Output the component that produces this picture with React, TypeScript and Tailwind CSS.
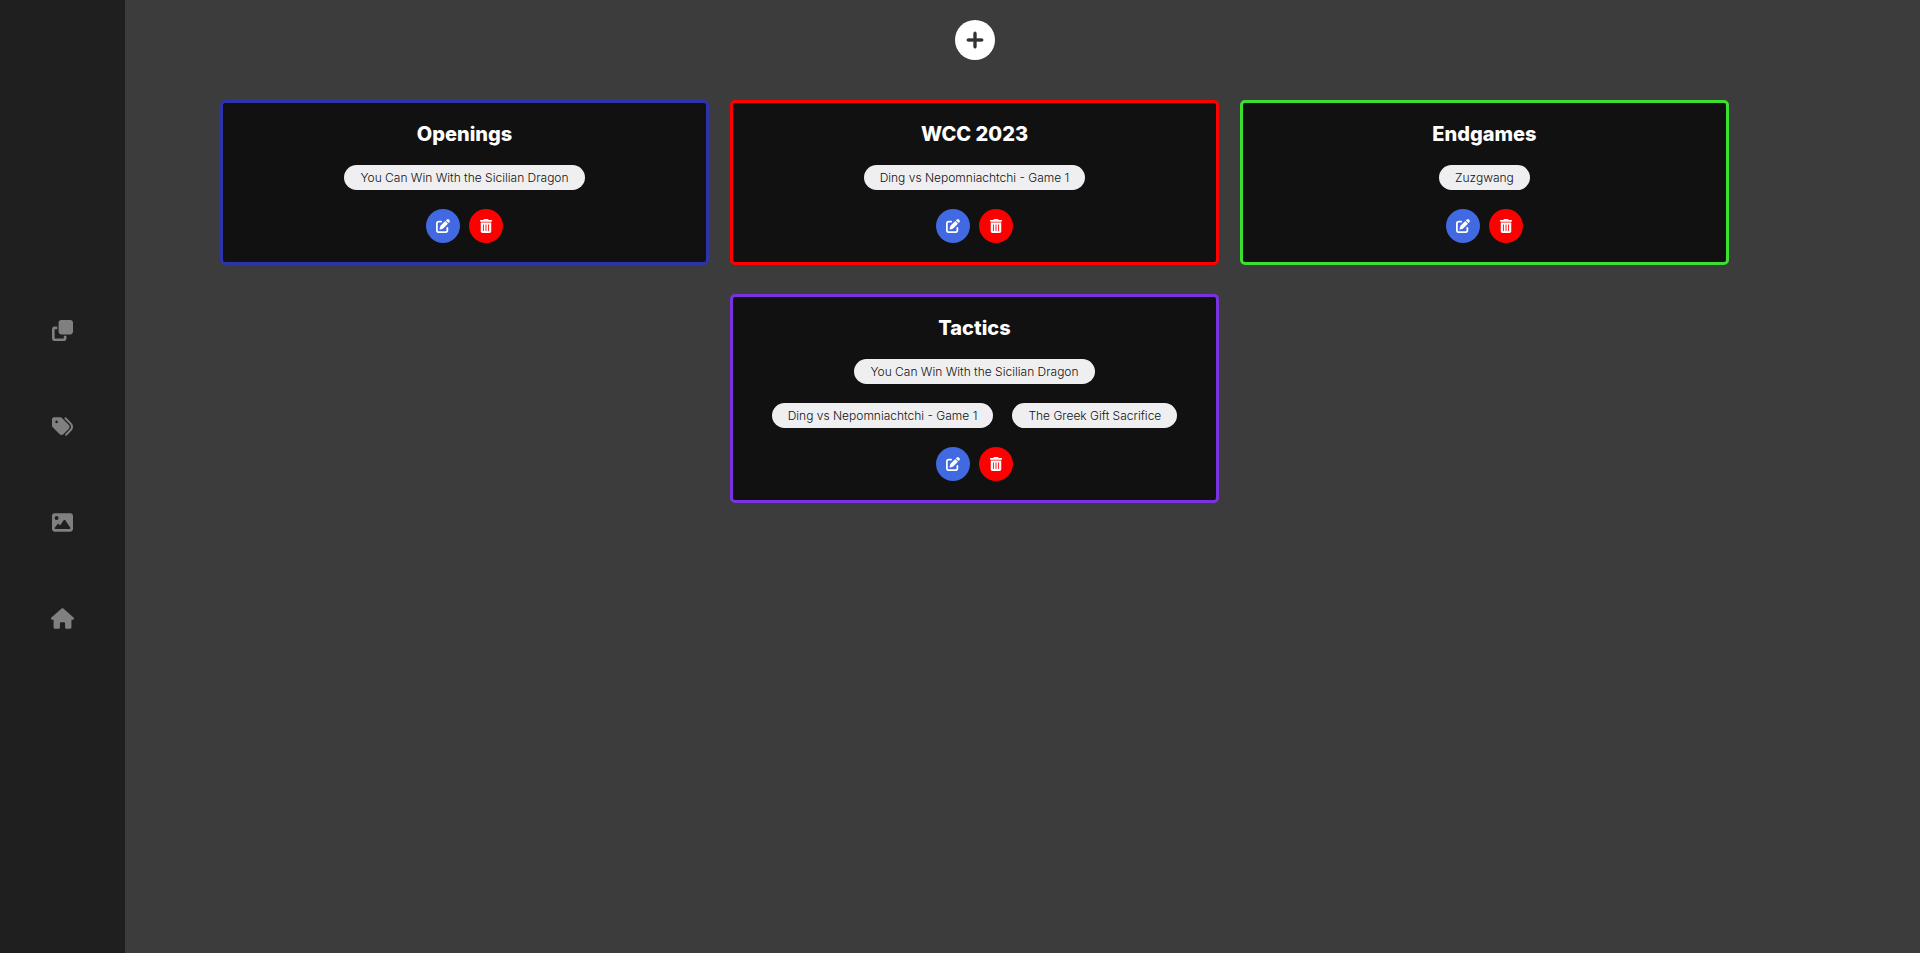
import type { IconType } from 'react-icons';
import { FaClone, FaHouse, FaImage, FaPenToSquare, FaPlus, FaTags, FaTrashCan } from 'react-icons/fa6';

type Tag = {
  name: string;
  border: string;
  posts: string[];
};

const tags: Tag[] = [
  { name: 'Openings', border: 'border-[#2d33aa]', posts: ['You Can Win With the Sicilian Dragon'] },
  { name: 'WCC 2023', border: 'border-[#ff0000]', posts: ['Ding vs Nepomniachtchi - Game 1'] },
  { name: 'Endgames', border: 'border-[#39e02f]', posts: ['Zuzgwang'] },
  {
    name: 'Tactics',
    border: 'border-[#7a32e0]',
    posts: [
      'You Can Win With the Sicilian Dragon',
      'Ding vs Nepomniachtchi - Game 1',
      'The Greek Gift Sacrifice',
    ],
  },
];

const links: { label: string; href: string; Icon: IconType; size: string }[] = [
  { label: 'Posts', href: '#posts', Icon: FaClone, size: 'w-[21px]' },
  { label: 'Tags', href: '#tags', Icon: FaTags, size: 'w-[21px]' },
  { label: 'Images', href: '#images', Icon: FaImage, size: 'w-[21px]' },
  { label: 'Home', href: '#home', Icon: FaHouse, size: 'w-[23px]' },
];

function Sidebar() {
  return (
    <nav className="flex w-[125px] shrink-0 flex-col items-center justify-center gap-[75px] bg-[#1f1f1f] pb-1 text-[#808080]">
      {links.map(({ label, href, Icon, size }) => (
        <a key={label} href={href} aria-label={label} className="hover:text-white">
          <Icon className={`h-[21px] ${size}`} />
        </a>
      ))}
    </nav>
  );
}

function TagCard({ tag }: { tag: Tag }) {
  return (
    <article
      className={`flex w-[calc((100%-42px)/3)] flex-col items-center gap-[19px] rounded-[5px] border-[3px] bg-[#111111] px-5 pt-[18px] pb-[19px] ${tag.border}`}
    >
      <h2 className="pt-px text-xl leading-6 font-extrabold text-white">{tag.name}</h2>
      <ul className="flex flex-wrap justify-center gap-[19px]">
        {tag.posts.map((post) => (
          <li key={post} className="rounded-full bg-[#efeff1] px-4 text-xs leading-[25px] font-light text-[#111111]">
            {post}
          </li>
        ))}
      </ul>
      <div className="flex gap-[9px] text-sm text-white">
        <button
          type="button"
          aria-label={`Edit ${tag.name}`}
          className="flex size-[34px] items-center justify-center rounded-full bg-[#4169e1]"
        >
          <FaPenToSquare />
        </button>
        <button
          type="button"
          aria-label={`Delete ${tag.name}`}
          className="flex size-[34px] items-center justify-center rounded-full bg-[#ff0000]"
        >
          <FaTrashCan />
        </button>
      </div>
    </article>
  );
}

export default function App() {
  return (
    <div className="flex min-h-screen bg-[#3c3c3c] font-['Inter',sans-serif]">
      <Sidebar />
      <main className="flex min-w-0 flex-1 flex-col items-center gap-10 py-5 pr-[191px] pl-[95px]">
        <button
          type="button"
          aria-label="Add tag"
          className="flex size-10 items-center justify-center rounded-full bg-white text-xl text-[#333333]"
        >
          <FaPlus className="stroke-current stroke-[20px]" />
        </button>
        <section className="flex w-full flex-wrap items-start justify-center gap-x-[21px] gap-y-[29px]">
          {tags.map((tag) => (
            <TagCard key={tag.name} tag={tag} />
          ))}
        </section>
      </main>
    </div>
  );
}
